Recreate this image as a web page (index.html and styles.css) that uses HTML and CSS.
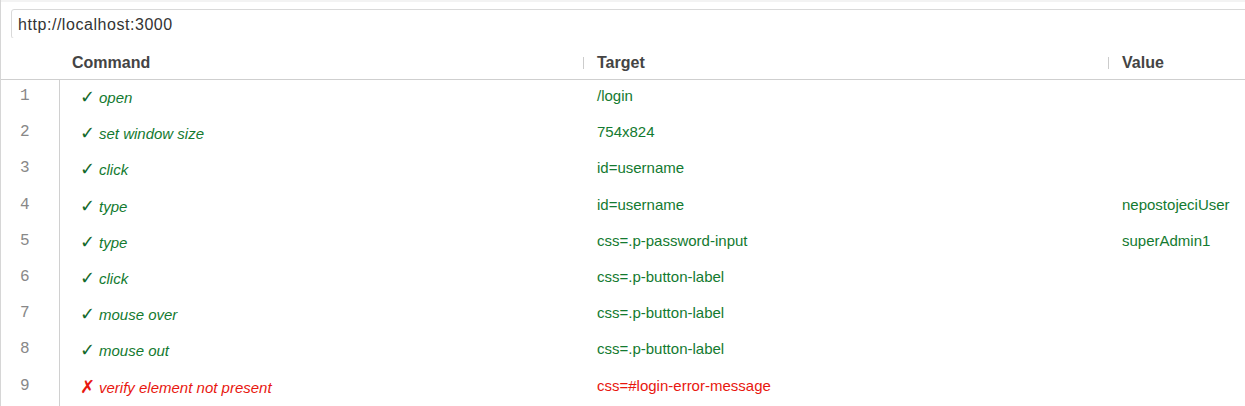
FILE: index.html
```html
<!DOCTYPE html>
<html>
<head>
<meta charset="utf-8">
<link rel="stylesheet" href="styles.css">
</head>
<body>
<div class="app">
  <div class="urlbar">
    <input class="url" type="text" value="http://localhost:3000">
  </div>
  <div class="table">
    <div class="head">
      <div class="h-num"></div>
      <div class="h-cell h-cmd">Command</div>
      <div class="h-cell sep">Target</div>
      <div class="h-cell sep">Value</div>
    </div>
    <div class="body">
      <div class="row ok"><div class="num">1</div><div class="cmd"><span class="mark">✓</span>open</div><div class="tgt">/login</div><div class="val"></div></div>
      <div class="row ok"><div class="num">2</div><div class="cmd"><span class="mark">✓</span>set window size</div><div class="tgt">754x824</div><div class="val"></div></div>
      <div class="row ok"><div class="num">3</div><div class="cmd"><span class="mark">✓</span>click</div><div class="tgt">id=username</div><div class="val"></div></div>
      <div class="row ok"><div class="num">4</div><div class="cmd"><span class="mark">✓</span>type</div><div class="tgt">id=username</div><div class="val">nepostojeciUser</div></div>
      <div class="row ok"><div class="num">5</div><div class="cmd"><span class="mark">✓</span>type</div><div class="tgt">css=.p-password-input</div><div class="val">superAdmin1</div></div>
      <div class="row ok"><div class="num">6</div><div class="cmd"><span class="mark">✓</span>click</div><div class="tgt">css=.p-button-label</div><div class="val"></div></div>
      <div class="row ok"><div class="num">7</div><div class="cmd"><span class="mark">✓</span>mouse over</div><div class="tgt">css=.p-button-label</div><div class="val"></div></div>
      <div class="row ok"><div class="num">8</div><div class="cmd"><span class="mark">✓</span>mouse out</div><div class="tgt">css=.p-button-label</div><div class="val"></div></div>
      <div class="row fail"><div class="num">9</div><div class="cmd"><span class="mark">✗</span>verify element not present</div><div class="tgt">css=#login-error-message</div><div class="val"></div></div>
    </div>
  </div>
</div>
</body>
</html>
```

FILE: styles.css
```css
html, body {
  margin: 0;
  padding: 0;
  background: #fff;
  font-family: "Liberation Sans", Arial, sans-serif;
  overflow: hidden;
}
.app {
  width: 1245px;
  height: 406px;
  border-left: 1px solid #d6d6d6;
  box-sizing: border-box;
  background: #fff;
}
.urlbar {
  background: #fff;
  border-top: 2px solid #f3f3f3;
  padding: 7px 0 0 10px;
  height: 38px;
  box-sizing: border-box;
  overflow: hidden;
}
.url {
  display: block;
  width: 1260px;
  height: 30px;
  box-sizing: border-box;
  border: 1px solid #d9d9d9;
  border-radius: 3px;
  padding: 1px 6px 0;
  font-family: "Liberation Sans", Arial, sans-serif;
  font-size: 16px;
  letter-spacing: 0.55px;
  color: #333;
  outline: none;
  background: #fff;
}
.head {
  display: grid;
  grid-template-columns: 59px 523px 525px 1fr;
  height: 41px;
  border-bottom: 1px solid #cfcfcf;
  align-items: center;
}
.h-cell {
  font-size: 16px;
  font-weight: bold;
  color: #444;
  padding-top: 8px;
}
.h-cmd {
  padding-left: 12px;
}
.sep {
  position: relative;
  padding-left: 14px;
}
.sep::before {
  content: "";
  position: absolute;
  left: 0;
  top: 11px;
  width: 1px;
  height: 12px;
  background: #cccccc;
}
.row {
  display: grid;
  grid-template-columns: 59px 523px 525px 1fr;
  height: 36.2px;
  align-items: center;
  font-size: 15px;
}
.num {
  height: 100%;
  border-right: 1px solid #d0d0d0;
  box-sizing: border-box;
  font-family: "Liberation Mono", "DejaVu Sans Mono", monospace;
  font-size: 16px;
  color: #888;
  padding-left: 19px;
  display: flex;
  align-items: center;
  padding-bottom: 4px;
}
.cmd {
  padding-left: 20px;
  font-style: italic;
  padding-bottom: 3px;
}
.mark {
  font-style: normal;
  display: inline-block;
  width: 19px;
  font-size: 18px;
  font-family: "DejaVu Sans", sans-serif;
}
.tgt {
  padding-left: 14px;
  padding-bottom: 5px;
}
.val {
  padding-left: 14px;
  padding-bottom: 5px;
}
.ok .cmd, .ok .tgt, .ok .val {
  color: #137a30;
}
.ok .mark {
  color: #13692a;
}
.fail .cmd, .fail .tgt, .fail .val, .fail .mark {
  color: #e8170f;
}
```
